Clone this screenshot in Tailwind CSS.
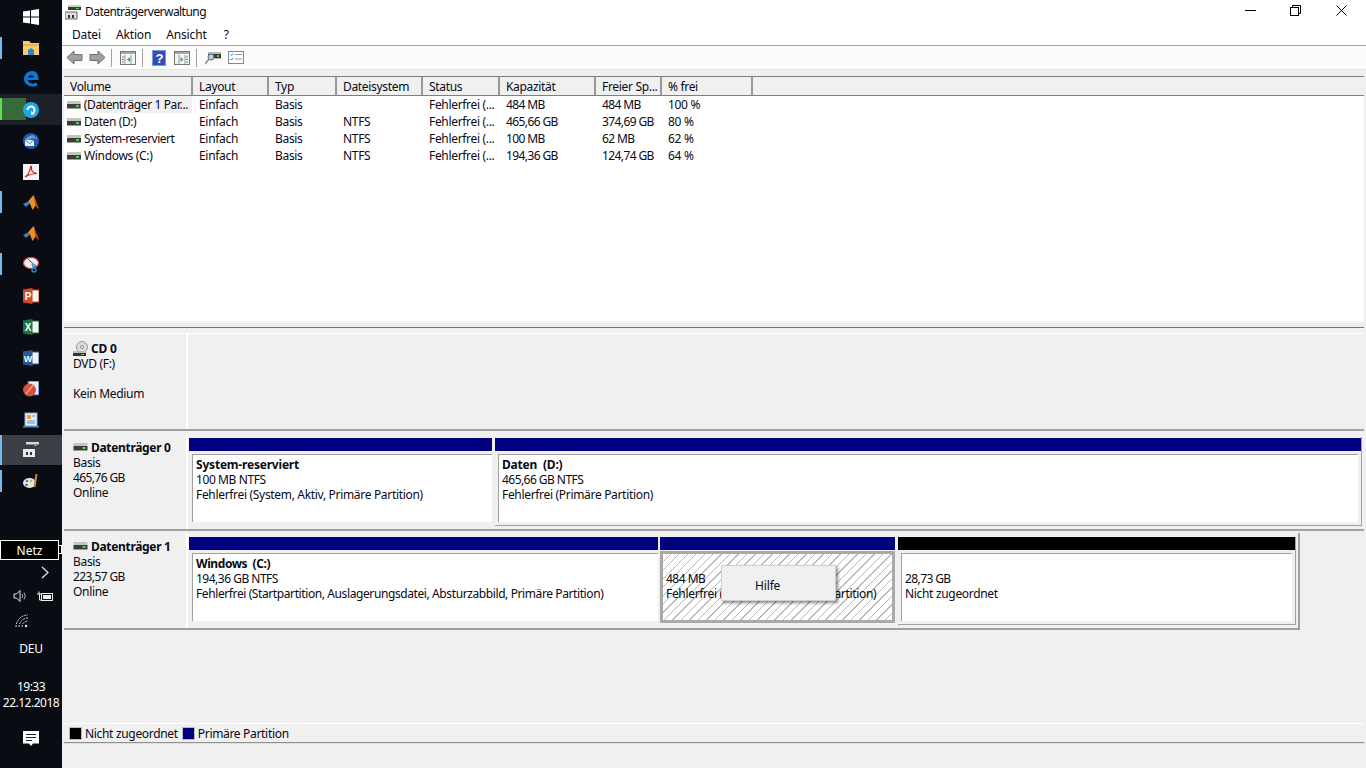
<!DOCTYPE html>
<html lang="de"><head><meta charset="utf-8"><title>Datenträgerverwaltung</title>
<script src="https://cdn.jsdelivr.net/npm/@tailwindcss/browser@4"></script></head>
<body class="m-0">
<svg width="0" height="0" class="absolute">
<defs>
<symbol id="disk" viewBox="0 0 14 8"><rect x="0" y="0" width="14" height="3" fill="#c4c4c4"/><rect x="0" y="3" width="14" height="4" fill="#3c3c3c"/><rect x="9" y="4" width="3" height="2" fill="#4fd04f"/><rect x="0" y="7" width="14" height="1" fill="#9a9a9a"/></symbol>
</defs></svg>
<div class="w-[1366px] h-[768px] overflow-hidden flex bg-[#f0f0f0] text-[12px] leading-[15px] text-[#0a0a14] font-['Noto_Sans',sans-serif] tracking-[-0.32px]">
 <!-- taskbar -->
 <aside class="w-[62px] h-full bg-[#090d13] flex flex-col text-white shrink-0">
  <div class="flex flex-col pt-[1px]">
   <div class="h-[31px] flex items-center justify-center"><svg width="16" height="16" viewBox="0 0 16 16" fill="#fff"><path d="M0 2.400 7 1.400V7.500H0zM8 1.300 16 0V7.500H8zM0 8.500H7V14.600L0 13.600zM8 8.500H16V16L8 14.700z"/></svg></div>
   <div class="h-[31px] flex items-center justify-center relative"><span class="absolute left-0 top-[5px] w-[2px] h-[22px] bg-[#76b9ed]"></span><svg width="16" height="16" viewBox="0 0 16 16"><path d="M0 1H6L8 3H16V15H0z" fill="#f4cf6b"/><path d="M0 4H16V6H0z" fill="#e8b64c"/><path d="M5 15V10L8 8L11 10V15z" fill="#2a87d0"/></svg></div>
   <div class="h-[31px] flex items-center justify-center"><svg width="16" height="16" viewBox="0 0 16 16"><path d="M1 8C1 3 5 0 9 0C13 0 16 3 15.500 9H5C5 12 9 14 14 11.500V14.800C8 17 1 14 1 8ZM5 6.500H11C11 3.500 6 3.500 5 6.500Z" fill="#0c78d6"/></svg></div>
   <div class="h-[31px] flex items-center justify-center relative bg-[#1c2127]"><span class="absolute left-0 top-0 w-[26px] h-[22px] mt-[4px] bg-[#37693a]"></span><span class="absolute left-0 top-0 mt-[4px] w-[2px] h-[22px] bg-[#5ee04b]"></span><svg class="relative" width="16" height="16" viewBox="0 0 16 16"><circle cx="8" cy="8" r="8" fill="#1fa8e8"/><path d="M4.500 8A3.500 3.500 0 1 1 8 11.500" fill="none" stroke="#fff" stroke-width="2"/><path d="M8 9L12 12.500H8z" fill="#fff"/></svg></div>
   <div class="h-[31px] flex items-center justify-center"><svg width="16" height="16" viewBox="0 0 16 16"><circle cx="8" cy="8" r="8" fill="#1d5aa8"/><path d="M1 8Q4 3 10 2L15 6Q9 4 6 7z" fill="#5f9fe0"/><rect x="2" y="7" width="9" height="6" fill="#e8eef5"/><path d="M2 7 6.500 10.500 11 7" fill="none" stroke="#5a7fa8"/></svg></div>
   <div class="h-[31px] flex items-center justify-center"><svg width="16" height="16" viewBox="0 0 16 16"><rect width="16" height="16" fill="#f4f4f4"/><path d="M2 13C5 11 7 7 7.500 3C7.800 1.500 8.800 2 8.500 4C8 7 10 9 14 9.500C11 9.500 6 10.500 2 13Z" fill="none" stroke="#d2231e" stroke-width="1.200"/></svg></div>
   <div class="h-[31px] flex items-center justify-center relative"><span class="absolute left-0 top-[4px] w-[2px] h-[22px] bg-[#76b9ed]"></span><svg width="16" height="16" viewBox="0 0 16 16"><path d="M0 9L5 6.500L7 8.500L3 12z" fill="#3f7fc0"/><path d="M5 6.500L10.500 0L16 14L12.500 10.500L9.500 15L7 8.500z" fill="#e8902a"/><path d="M10.500 0L16 14L12.500 10.500z" fill="#b8401e"/></svg></div>
   <div class="h-[31px] flex items-center justify-center"><svg width="16" height="16" viewBox="0 0 16 16"><path d="M0 9L5 6.500L7 8.500L3 12z" fill="#3f7fc0"/><path d="M5 6.500L10.500 0L16 14L12.500 10.500L9.500 15L7 8.500z" fill="#e8902a"/><path d="M10.500 0L16 14L12.500 10.500z" fill="#b8401e"/></svg></div>
   <div class="h-[31px] flex items-center justify-center relative"><span class="absolute left-0 top-[4px] w-[2px] h-[22px] bg-[#76b9ed]"></span><svg width="16" height="16" viewBox="0 0 16 16"><ellipse cx="8" cy="6" rx="7.500" ry="5.500" fill="#eee" stroke="#d8404a" stroke-width="1.200"/><path d="M8 5L5 2M8 5L12 8" stroke="#555"/><circle cx="11" cy="13" r="2" fill="none" stroke="#1e88c8" stroke-width="1.500"/><path d="M9 7L11 11M13 8L11 11" stroke="#1e88c8" stroke-width="1.500"/></svg></div>
   <div class="h-[31px] flex items-center justify-center"><svg width="16" height="16" viewBox="0 0 16 16"><rect x="8" y="2" width="8" height="12" fill="#f3f3f3" stroke="#d24726"/><path d="M0 1.500L9.500 0V16L0 14.500z" fill="#d24726"/><text x="1.800" y="12" font-size="10" font-weight="700" fill="#fff" font-family="Liberation Sans">P</text></svg></div>
   <div class="h-[31px] flex items-center justify-center"><svg width="16" height="16" viewBox="0 0 16 16"><rect x="8" y="2" width="8" height="12" fill="#f3f3f3" stroke="#1e7145"/><path d="M0 1.500L9.500 0V16L0 14.500z" fill="#1e7145"/><text x="1.800" y="12" font-size="10" font-weight="700" fill="#fff" font-family="Liberation Sans">X</text></svg></div>
   <div class="h-[31px] flex items-center justify-center"><svg width="16" height="16" viewBox="0 0 16 16"><rect x="8" y="2" width="8" height="12" fill="#f3f3f3" stroke="#2b5797"/><path d="M0 1.500L9.500 0V16L0 14.500z" fill="#2b5797"/><text x="0.800" y="12" font-size="9" font-weight="700" fill="#fff" font-family="Liberation Sans">W</text></svg></div>
   <div class="h-[31px] flex items-center justify-center"><svg width="16" height="16" viewBox="0 0 16 16"><rect x="5" y="0" width="11" height="14" fill="#e8eef8" stroke="#2b4fc0"/><circle cx="6.500" cy="9" r="6.500" fill="#d8503e"/><path d="M3 13L11 3" stroke="#f3c0b0" stroke-width="1.200"/></svg></div>
   <div class="h-[31px] flex items-center justify-center"><svg width="16" height="16" viewBox="0 0 16 16"><rect x="2" y="1" width="12" height="13" fill="#e4eef8" stroke="#7fa8d0"/><rect x="4" y="3" width="4" height="4" fill="#f0a040"/><path d="M9 4H12M4 9H12M4 11H12" stroke="#6a8fb8"/><rect x="0" y="14" width="16" height="1.500" fill="#4a8ac0"/></svg></div>
   <div class="h-[30px] flex items-center justify-center relative bg-[#3c3f45]"><span class="absolute left-0 top-0 w-[2px] h-[30px] bg-[#76b9ed]"></span><svg width="16" height="16" viewBox="0 0 16 16"><path d="M3 0H16V5H3z" fill="#d8d8d8"/><rect x="3" y="2.500" width="13" height="2.500" fill="#3a3a3a"/><rect x="11" y="3" width="3" height="1" fill="#4fd04f"/><path d="M0 7H12V15H0z" fill="#e8e8e8"/><rect x="3" y="10" width="2" height="3" fill="#333"/><rect x="7" y="10" width="2" height="3" fill="#333"/></svg></div>
   <div class="h-[32px] flex items-center justify-center relative"><span class="absolute left-0 top-[5px] w-[2px] h-[22px] bg-[#76b9ed]"></span><svg width="16" height="16" viewBox="0 0 16 16"><ellipse cx="6.500" cy="10" rx="6.500" ry="5" fill="#dfe8ee"/><circle cx="4" cy="8" r="1.300" fill="#3a8ad0"/><circle cx="8" cy="8" r="1.300" fill="#e8b030"/><circle cx="3.500" cy="12" r="1.300" fill="#d04030"/><path d="M13.500 1L11.500 14" stroke="#d08030" stroke-width="2"/></svg></div>
  </div>
  <div class="relative mt-[43px] w-[59px] h-[20px] bg-black border border-white flex items-center justify-center text-[12px] tracking-normal">Netz<span class="absolute -right-[4px] top-[4px] w-[3px] h-[9px] bg-black border-y border-r border-white"></span></div>
  <div class="h-[25px] flex items-center justify-end pr-[12px]"><svg width="10" height="13" viewBox="0 0 10 13" fill="none" stroke="#e8e8e8" stroke-width="1.200"><path d="M2 1L8 6.500L2 12"/></svg></div>
  <div class="h-[20px] flex items-center pl-[13px] gap-[8px] pt-[2px]"><svg width="16" height="14" viewBox="0 0 16 14" fill="none" stroke="#e8e8e8"><path d="M1 5H3.500L7 1.500V12.500L3.500 9H1z"/><path d="M9 5Q10.500 7 9 9M11 3.500Q13.500 7 11 10.500" stroke="#aaa"/></svg><svg width="16" height="11" viewBox="0 0 16 11"><rect x="4.500" y="2.500" width="11" height="7" fill="#111" stroke="#eee"/><rect x="6" y="4" width="8" height="4" fill="#eee"/><path d="M0 3H4.500M2 .5V3M2.500 3V9H4.500" stroke="#eee" fill="none"/></svg></div>
  <div class="h-[31px] flex items-center pl-[15px] pt-[1px]"><svg width="14" height="14" viewBox="0 0 14 14" fill="none" stroke="#d8d8d8"><path d="M1 13A12 12 0 0 1 13 1M4 13A9 9 0 0 1 13 4M7 13A6 6 0 0 1 13 7" stroke-dasharray="2 1"/><circle cx="11" cy="12" r="1.200" fill="#eee" stroke="none"/></svg></div>
  <div class="h-[22px] mt-px flex items-center justify-center tracking-[-0.2px]">DEU</div>
  <div class="mt-[20px] text-center tracking-[-0.5px] leading-[16px] h-[32px]">19:33<br>22.12.2018</div>
  <div class="mt-[20px] flex justify-center"><svg width="16" height="16" viewBox="0 0 16 16"><path d="M0 0H16V12.500H10L8 15L6 12.500H0z" fill="#fff"/><path d="M3 3.500H13M3 6.500H13M3 9.500H9" stroke="#222"/></svg></div>
 </aside>
 <!-- window -->
 <main class="flex-1 flex flex-col min-w-0">
  <div class="h-[23px] bg-white flex items-center pl-[3px] shrink-0">
   <svg width="16" height="16" viewBox="0 0 16 16"><path d="M3 1H16V6H3z" fill="#d0d0d0"/><rect x="3" y="3" width="13" height="3" fill="#3a3a3a"/><rect x="11" y="4" width="3" height="1" fill="#4fd04f"/><path d="M0 8H12V15H0z" fill="#e0e0e0" stroke="#666"/><rect x="3" y="11" width="2" height="3" fill="#333"/><rect x="7" y="11" width="2" height="3" fill="#333"/></svg>
   <span class="ml-[4px] tracking-[-0.55px]">Datenträgerverwaltung</span>
   <div class="ml-auto flex items-center pr-[19px] -mt-[3px]">
    <svg width="11" height="11" viewBox="0 0 11 11"><path d="M0 5.500H11" stroke="#000"/></svg>
    <svg class="ml-[34px]" width="11" height="11" viewBox="0 0 11 11" fill="none" stroke="#000"><rect x=".5" y="2.500" width="8" height="8"/><path d="M2.500 2.500V.5H10.500V8.500H8.500"/></svg>
    <svg class="ml-[35px]" width="11" height="11" viewBox="0 0 11 11" stroke="#000"><path d="M.5.5 10.500 10.500M10.500.5.5 10.500"/></svg>
   </div>
  </div>
  <div class="h-[23px] bg-white border-b border-[#a8a8a8] flex items-center pl-[10px] gap-[15px] tracking-[-0.15px] shrink-0">
   <span>Datei</span><span>Aktion</span><span>Ansicht</span><span class="ml-[2px]">?</span>
  </div>
  <div class="h-[23px] bg-[#fcfcfc] flex items-center pl-[4px] shrink-0">
   <svg width="17" height="15" viewBox="0 0 17 15"><path d="M1 7.500L8 1V4.500H16V10.500H8V14z" fill="#a0a0a0" stroke="#6f6f6f"/></svg>
   <svg class="ml-[6px]" width="17" height="15" viewBox="0 0 17 15"><path d="M16 7.500L9 1V4.500H1V10.500H9V14z" fill="#a0a0a0" stroke="#6f6f6f"/></svg>
   <span class="ml-[5px] w-px h-[18px] bg-[#a0a0a0]"></span>
   <svg class="ml-[8px]" width="16" height="14" viewBox="0 0 16 14" fill="none"><rect x=".5" y=".5" width="15" height="13" fill="#f4f4f4" stroke="#777"/><rect x="1" y="1" width="14" height="2" fill="#aaa"/><path d="M5 4V13M11 4V13" stroke="#999"/><path d="M2 6H4M2 8.500H4M2 11H4" stroke="#5a8ac0"/><path d="M10 6V11L7 8.500z" fill="#3ab050"/></svg>
   <span class="ml-[6px] w-px h-[18px] bg-[#a0a0a0]"></span>
   <svg class="ml-[9px]" width="14" height="16" viewBox="0 0 14 16"><rect width="14" height="16" fill="#2e4fb8"/><rect x=".5" y=".5" width="13" height="15" fill="none" stroke="#7f98e0"/><text x="3.500" y="13" font-size="13" font-weight="700" fill="#fff" font-family="Liberation Sans">?</text></svg>
   <svg class="ml-[8px]" width="16" height="14" viewBox="0 0 16 14" fill="none"><rect x=".5" y=".5" width="15" height="13" fill="#f4f4f4" stroke="#777"/><rect x="1" y="1" width="14" height="2" fill="#aaa"/><path d="M5 4V13M11 4V13" stroke="#999"/><path d="M12 6H14M12 8.500H14M12 11H14" stroke="#5a8ac0"/><path d="M6.500 6V11L9.500 8.500z" fill="#3ab050"/></svg>
   <span class="ml-[6px] w-px h-[18px] bg-[#a0a0a0]"></span>
   <svg class="ml-[8px]" width="16" height="14" viewBox="0 0 16 14"><rect x="3" y="1" width="13" height="7" fill="#b8b8b8"/><rect x="3" y="3" width="13" height="4" fill="#3a3a3a"/><rect x="12" y="4" width="2" height="2" fill="#4fd04f"/><circle cx="6" cy="6" r="3" fill="#a8d8e8" stroke="#667"/><path d="M4 8L0 13" stroke="#888" stroke-width="1.500"/></svg>
   <svg class="ml-[7px]" width="16" height="14" viewBox="0 0 16 14" fill="none"><rect x=".5" y=".5" width="15" height="12" fill="#fff" stroke="#888"/><path d="M2.500 3.500 3.500 4.500 5 2.500M2.500 8 3.500 9 5 7" stroke="#2a80d0"/><path d="M7 3.500H14M7 8H14" stroke="#999"/></svg>
  </div>
  <div class="h-[7px] bg-[#f0f0f0] border-t border-[#e4e4e4] shrink-0"></div>
  <!-- list -->
  <section class="ml-[2px] w-[1300px] h-[245px] bg-white flex flex-col shrink-0">
   <div class="h-[20px] bg-[#f0f0f0] border-t border-b border-[#7f7f7f] flex items-center shrink-0">
    <div class="w-[129px] h-full pl-[6px] border-r-2 border-[#999] flex items-center">Volume</div>
    <div class="w-[76px] h-full pl-[6px] border-r-2 border-[#999] flex items-center">Layout</div>
    <div class="w-[68px] h-full pl-[6px] border-r-2 border-[#999] flex items-center">Typ</div>
    <div class="w-[86px] h-full pl-[6px] border-r-2 border-[#999] flex items-center">Dateisystem</div>
    <div class="w-[77px] h-full pl-[6px] border-r-2 border-[#999] flex items-center">Status</div>
    <div class="w-[96px] h-full pl-[6px] border-r-2 border-[#999] flex items-center">Kapazität</div>
    <div class="w-[66px] h-full pl-[6px] border-r-2 border-[#999] flex items-center">Freier Sp...</div>
    <div class="w-[91px] h-full pl-[6px] border-r-2 border-[#999] flex items-center">% frei</div>
    <div class="flex-1 h-full"></div>
   </div>
   <div class="flex flex-col">
    <div class="h-[17px] flex items-center">
     <div class="w-[128px] pl-[3px] flex items-center gap-[3px] h-full tracking-[-0.38px]"><svg width="14" height="8"><use href="#disk"/></svg><span class="bg-[#f0f0f0] h-full flex items-center w-[110px] whitespace-nowrap">(Datenträger 1 Par...</span></div>
     <div class="w-[76px] pl-[7px]">Einfach</div><div class="w-[68px] pl-[7px]">Basis</div><div class="w-[86px] pl-[7px]"></div><div class="w-[77px] pl-[7px]">Fehlerfrei (...</div><div class="w-[96px] pl-[7px] tracking-[-0.6px]">484 MB</div><div class="w-[66px] pl-[7px] tracking-[-0.6px]">484 MB</div><div class="w-[91px] pl-[7px]">100 %</div>
    </div>
    <div class="h-[17px] flex items-center">
     <div class="w-[128px] pl-[3px] flex items-center gap-[3px] tracking-[-0.4px]"><svg width="14" height="8"><use href="#disk"/></svg><span>Daten (D:)</span></div>
     <div class="w-[76px] pl-[7px]">Einfach</div><div class="w-[68px] pl-[7px]">Basis</div><div class="w-[86px] pl-[7px]">NTFS</div><div class="w-[77px] pl-[7px]">Fehlerfrei (...</div><div class="w-[96px] pl-[7px] tracking-[-0.6px]">465,66 GB</div><div class="w-[66px] pl-[7px] tracking-[-0.6px] whitespace-nowrap">374,69 GB</div><div class="w-[91px] pl-[7px]">80 %</div>
    </div>
    <div class="h-[17px] flex items-center">
     <div class="w-[128px] pl-[3px] flex items-center gap-[3px] tracking-[-0.5px]"><svg width="14" height="8"><use href="#disk"/></svg><span>System-reserviert</span></div>
     <div class="w-[76px] pl-[7px]">Einfach</div><div class="w-[68px] pl-[7px]">Basis</div><div class="w-[86px] pl-[7px]">NTFS</div><div class="w-[77px] pl-[7px]">Fehlerfrei (...</div><div class="w-[96px] pl-[7px] tracking-[-0.6px]">100 MB</div><div class="w-[66px] pl-[7px] tracking-[-0.6px]">62 MB</div><div class="w-[91px] pl-[7px]">62 %</div>
    </div>
    <div class="h-[17px] flex items-center">
     <div class="w-[128px] pl-[3px] flex items-center gap-[3px]"><svg width="14" height="8"><use href="#disk"/></svg><span>Windows (C:)</span></div>
     <div class="w-[76px] pl-[7px]">Einfach</div><div class="w-[68px] pl-[7px]">Basis</div><div class="w-[86px] pl-[7px]">NTFS</div><div class="w-[77px] pl-[7px]">Fehlerfrei (...</div><div class="w-[96px] pl-[7px] tracking-[-0.6px]">194,36 GB</div><div class="w-[66px] pl-[7px] tracking-[-0.6px] whitespace-nowrap">124,74 GB</div><div class="w-[91px] pl-[7px]">64 %</div>
    </div>
   </div>
  </section>
  <!-- splitter -->
  <div class="ml-[2px] w-[1300px] h-[12px] shrink-0 flex flex-col">
   <div class="h-[2px] bg-[#f4f4f4]"></div>
   <div class="h-[5px] bg-[#ececec] border-b border-[#777]"></div>
   <div class="h-[5px] bg-[#f0f0f0]"></div>
  </div>
  <!-- disks -->
  <section class="ml-[2px] w-[1300px] h-[390px] flex flex-col shrink-0 border-t border-white">
   <div class="h-[97px] flex border-b-2 border-[#a0a0a0] shrink-0">
    <div class="w-[124px] h-full pl-[9px] pt-[6px] border-r-2 border-white">
     <div class="flex items-center h-[16px]"><svg width="15" height="15" viewBox="0 0 15 15"><circle cx="9" cy="6" r="5.500" fill="#ddd" stroke="#999"/><circle cx="9" cy="6" r="1.500" fill="#fff" stroke="#888"/><rect x="0" y="10" width="13" height="2" fill="#bbb"/><rect x="0" y="12" width="13" height="3" fill="#333"/><rect x="8" y="13" width="3" height="1" fill="#4fd04f"/></svg><b class="ml-[3px] tracking-[-0.2px]">CD 0</b></div>
     <div>DVD (F:)</div><div class="mt-[15px]">Kein Medium</div>
    </div>
   </div>
   <div class="h-[98px] flex border-b-2 border-[#a0a0a0] shrink-0 mt-[2px]">
    <div class="w-[124px] h-full pl-[9px] pt-[6px] border-r-2 border-white shrink-0">
     <div class="flex items-center h-[16px]"><svg width="15" height="8"><use href="#disk"/></svg><b class="ml-[3px] tracking-[-0.32px]">Datenträger 0</b></div>
     <div>Basis</div><div class="tracking-[-0.6px]">465,76 GB</div><div>Online</div>
    </div>
    <div class="flex-1 flex pt-[5px] pl-[1px] min-w-0 pr-[2px]">
     <div class="w-[306px] pr-[3px] flex flex-col">
      <div class="h-[13px] bg-[#000080] shrink-0"></div>
      <div class="mt-[3px] ml-[3px] h-[68px] bg-white border-l border-t border-[#a0a0a0] pl-[3px] pt-[2px]"><b class="block tracking-[-0.2px]">System-reserviert</b><span class="tracking-[-0.4px]">100 MB NTFS</span><br>Fehlerfrei (System, Aktiv, Primäre Partition)</div>
     </div>
     <div class="flex-1 flex flex-col border-r border-b border-[#a0a0a0] h-[89px] min-w-0 -mt-px pt-px">
      <div class="h-[13px] bg-[#000080] shrink-0"></div>
      <div class="mt-[3px] ml-[3px] h-[68px] mr-[3px] bg-white border-l border-t border-[#a0a0a0] pl-[3px] pt-[2px]"><b class="block tracking-[-0.2px]">Daten&nbsp; (D:)</b><span class="tracking-[-0.55px]">465,66 GB NTFS</span><br>Fehlerfrei (Primäre Partition)</div>
     </div>
    </div>
   </div>
   <div class="h-[97px] flex shrink-0 mt-[2px] border-b-2 border-[#a0a0a0] w-[1236px]">
    <div class="w-[124px] h-full pl-[9px] pt-[5px] border-r-2 border-white shrink-0">
     <div class="flex items-center h-[16px]"><svg width="15" height="8"><use href="#disk"/></svg><b class="ml-[3px] tracking-[-0.32px]">Datenträger 1</b></div>
     <div>Basis</div><div class="tracking-[-0.6px]">223,57 GB</div><div>Online</div>
    </div>
    <div class="flex-1 flex pt-[4px] pl-[1px] border-r-2 border-[#a0a0a0] pr-[2px] min-w-0 relative">
     <div class="w-[470px] pr-[1px] flex flex-col">
      <div class="h-[13px] bg-[#000080] shrink-0"></div>
      <div class="mt-[3px] ml-[3px] h-[68px] bg-white border-l border-t border-[#a0a0a0] pl-[3px] pt-[2px] tracking-[-0.4px]"><b class="block tracking-[-0.42px]">Windows&nbsp; (C:)</b><span class="tracking-[-0.5px]">194,36 GB NTFS</span><br>Fehlerfrei (Startpartition, Auslagerungsdatei, Absturzabbild, Primäre Partition)</div>
     </div>
     <div class="w-[239px] pl-[1px] pr-[3px] flex flex-col">
      <div class="h-[13px] bg-[#000080] shrink-0"></div>
      <div class="mt-[1px] h-[72px] border-[3px] border-[#a9a9a9] bg-white bg-[repeating-linear-gradient(135deg,#fff,#fff_5px,#b8b8b8_5px,#b8b8b8_6px)] pl-[3px] pt-[17px] whitespace-nowrap"><span class="tracking-[-0.5px]">484 MB</span><br>Fehlerfrei (Wiederherstellungspartition)</div>
     </div>
     <div class="flex-1 flex flex-col border-r border-b border-[#a0a0a0] h-[88px]">
      <div class="h-[13px] bg-black shrink-0"></div>
      <div class="mt-[3px] ml-[3px] h-[68px] mr-[3px] bg-white border-l border-t border-[#a0a0a0] pl-[3px] pt-[17px]"><span class="tracking-[-0.6px]">28,73 GB</span><br>Nicht zugeordnet</div>
     </div>
     <!-- context menu -->
     <div class="absolute left-[533px] top-[32px] w-[115px] h-[36px] bg-[#f0f0f0] border border-[#d0d0d0] shadow-[2px_2px_3px_rgba(0,0,0,0.45)] pl-[33px] pt-[12px] tracking-[-0.15px]">Hilfe</div>
    </div>
   </div>
  </section>
  <!-- legend -->
  <div class="ml-[2px] w-[1300px] h-[20px] bg-[#f0f0f0] border-t border-white border-b border-b-[#8f8f8f] flex items-center pl-[6px] shrink-0">
   <span class="w-[11px] h-[11px] bg-black outline outline-[#bbb]"></span><span class="ml-[4px]">Nicht zugeordnet</span>
   <span class="ml-[5px] w-[11px] h-[11px] bg-[#000080] outline outline-[#bbb]"></span><span class="ml-[4px]">Primäre Partition</span>
  </div>
  <div class="flex-1 bg-[#f0f0f0] border-t border-[#e0e0e0]"></div>
 </main>
</div>
</body></html>
